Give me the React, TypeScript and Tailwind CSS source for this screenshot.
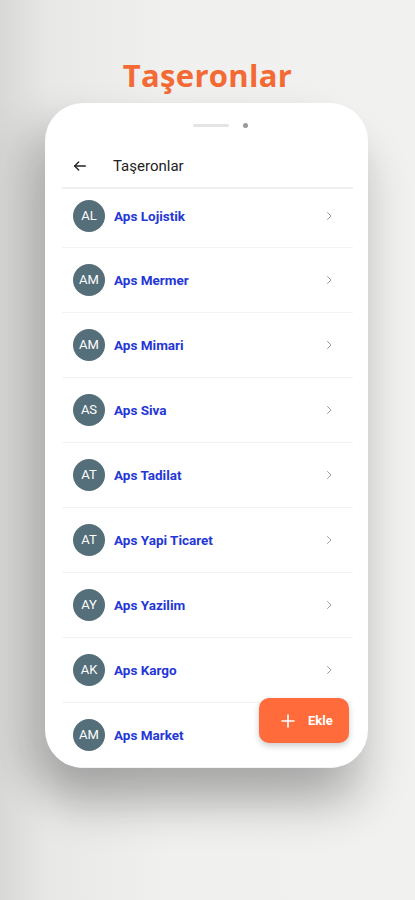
import React from 'react';

// Subcontractor list shown inside a phone mockup
const items = [
    { initials: 'AL', name: 'Aps Lojistik' },
    { initials: 'AM', name: 'Aps Mermer' },
    { initials: 'AM', name: 'Aps Mimari' },
    { initials: 'AS', name: 'Aps Siva' },
    { initials: 'AT', name: 'Aps Tadilat' },
    { initials: 'AT', name: 'Aps Yapi Ticaret' },
    { initials: 'AY', name: 'Aps Yazilim' },
    { initials: 'AK', name: 'Aps Kargo' },
    { initials: 'AM', name: 'Aps Market' },
];

const App: React.FC = () => {
    return (
        <div className="w-[415px] h-[900px] overflow-hidden bg-[linear-gradient(90deg,#d8d8d7_0%,#e8e8e7_12%,#f0f0ef_40%,#f1f1f0_100%)] flex flex-col items-center font-['Roboto',sans-serif]">
            {/* Title */}
            <h1 className="mt-[55px] text-[31px] leading-[40px] font-bold text-[#f46a34] font-['Open_Sans',sans-serif] tracking-[0.3px]">
                Taşeronlar
            </h1>

            {/* Phone */}
            <div className="relative mt-[8px] ml-[-2px] w-[323px] h-[665px] bg-white rounded-[38px] shadow-[-28px_18px_40px_rgba(0,0,0,0.14),0_40px_45px_rgba(0,0,0,0.2)] flex flex-col pl-[17px] pr-[15px] overflow-hidden">
                {/* Speaker */}
                <div className="flex items-center justify-center gap-[14px] pt-[20px] pl-[26px]">
                    <div className="w-[36px] h-[3px] rounded-full bg-[#e4e4e4]" />
                    <div className="w-[5px] h-[5px] rounded-full bg-[#9a9a9a]" />
                </div>

                {/* Header */}
                <div className="flex items-center h-[62px] mt-[1px] pt-[16px] border-b-2 border-[#f0f0f0]">
                    <svg className="ml-[10px] w-[16px] h-[16px]" viewBox="0 0 24 24" fill="none" stroke="#222" strokeWidth="2" strokeLinecap="round" strokeLinejoin="round">
                        <path d="M20 12H4" />
                        <path d="M10 6l-6 6 6 6" />
                    </svg>
                    <span className="ml-[25px] text-[15px] text-[#222]">Taşeronlar</span>
                </div>

                {/* List */}
                <div className="flex flex-col">
                    {items.map((item, i) => (
                        <div
                            key={i}
                            className={`flex items-center shrink-0 ${i === 0 ? 'h-[59px] pb-[4px]' : 'h-[65px]'} border-b border-[#f3f3f3] pl-[11px] pr-[18px]`}
                        >
                            <div className="w-[32px] h-[32px] rounded-full bg-[#546e7a] flex items-center justify-center text-white text-[13px]">
                                {item.initials}
                            </div>
                            <span className="ml-[9px] text-[13.5px] font-bold text-[#2437d6]">{item.name}</span>
                            <svg className="ml-auto w-[12px] h-[12px]" viewBox="0 0 24 24" fill="none" stroke="#9e9e9e" strokeWidth="2" strokeLinecap="round" strokeLinejoin="round">
                                <path d="M9 5l7 7-7 7" />
                            </svg>
                        </div>
                    ))}
                </div>

                {/* FAB */}
                <button className="absolute right-[19px] bottom-[25px] w-[90px] h-[45px] rounded-[10px] bg-[#ff6b3b] shadow-[0_3px_6px_rgba(0,0,0,0.2)] flex items-center pl-[20px] gap-[11px] text-white">
                    <svg className="w-[18px] h-[18px]" viewBox="0 0 24 24" fill="none" stroke="white" strokeWidth="2.2" strokeLinecap="round">
                        <path d="M12 4v16" />
                        <path d="M4 12h16" />
                    </svg>
                    <span className="text-[13px] font-bold">Ekle</span>
                </button>
            </div>
        </div>
    );
};

export default App;
